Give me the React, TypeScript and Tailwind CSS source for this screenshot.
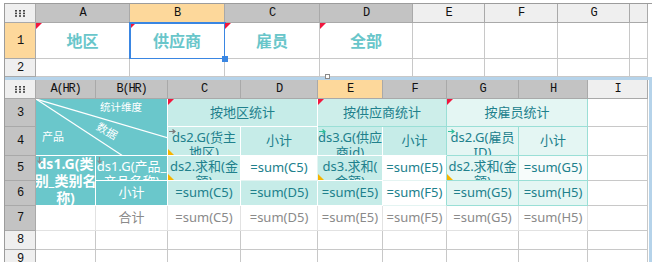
import React from 'react';

type CellProps = { className?: string; children?: React.ReactNode };

// header tones
const GRAY = 'bg-[#c3c3c3]';
const ORANGE = 'bg-[#fdd89b]';
const LIGHT = 'bg-[#efefef]';

// data cell tones
const TEAL = 'bg-[#6ac7cb] border-white text-white';
const MINT = 'bg-[#c6ece8] border-white text-[#20808c]';
const PALE = 'bg-[#e4f6f3] border-[#9adfd6] text-[#20808c]';
const BLANK = 'bg-white border-[#c8c8c8]';
const SUM = 'bg-white border-[#e4f4f2] text-[#20808c]';
const TOTAL = 'bg-white border-[#e2e2e2] text-[#8a8a8a]';

const Cell: React.FC<CellProps> = ({ className = '', children }) => (
  <div className={`relative flex items-center justify-center overflow-hidden whitespace-nowrap border-r border-b ${className}`}>
    {children}
  </div>
);

const Head: React.FC<CellProps> = ({ className = '', children }) => (
  <div
    className={`flex items-center justify-center border-r border-b border-[#a9a9a9] font-['Liberation_Mono',monospace] text-[12px] tracking-[-1.2px] text-[#111] ${className}`}
  >
    {children}
  </div>
);

const Dots = () => (
  <svg width="10" height="7" viewBox="0 0 10 7">
    {[0, 4, 8].map((x) =>
      [0, 2.6, 5.2].map((y) => <rect key={`${x}-${y}`} x={x} y={y} width="2" height="1.6" fill="#444" />)
    )}
  </svg>
);

const RedMark = () => (
  <span className="absolute left-0 top-0 border-t-[6px] border-r-[6px] border-t-[#f2163e] border-r-transparent" />
);

const YellowMark = () => (
  <span className="absolute left-0 bottom-0 border-b-[6px] border-r-[6px] border-b-[#f6b400] border-r-transparent" />
);

const ArrowRight = ({ color }: { color: string }) => (
  <svg className="absolute left-[1px] top-[2px]" width="7" height="5" viewBox="0 0 7 5">
    <path d="M0 2.5H5.5M3.5 0.5L6 2.5L3.5 4.5" stroke={color} strokeWidth="1.2" fill="none" />
  </svg>
);

const ArrowDown = () => (
  <svg className="absolute left-[1px] top-[1px]" width="5" height="7" viewBox="0 0 5 7">
    <path d="M2.5 0V5.5M0.5 3.5L2.5 6L4.5 3.5" stroke="#8a8a8a" strokeWidth="1.2" fill="none" />
  </svg>
);

// wrapped text, top aligned like the designer does when it overflows
const Lines = ({ lines, className = '' }: { lines: string[]; className?: string }) => (
  <div className={`flex flex-col items-center self-start pt-[3px] leading-[15px] ${className}`}>
    {lines.map((l) => (
      <span key={l}>{l}</span>
    ))}
  </div>
);

const TopPanel = () => (
  <div className="relative">
    <div className="grid grid-cols-[31px_94px_95px_95px_93px_72px_73px_72px_18px] grid-rows-[19px_36px_18px]">
      <Head className={LIGHT}>
        <Dots />
      </Head>
      <Head className={GRAY}>A</Head>
      <Head className={ORANGE}>B</Head>
      <Head className={GRAY}>C</Head>
      <Head className={GRAY}>D</Head>
      <Head className={LIGHT}>E</Head>
      <Head className={LIGHT}>F</Head>
      <Head className={LIGHT}>G</Head>
      <Head className={LIGHT}></Head>

      <Head className={ORANGE}>1</Head>
      {['地区', '供应商', '雇员', '全部'].map((t, i) => (
        <div
          key={t}
          className={`relative flex items-center justify-center border-r border-b border-[#c8c8c8] bg-white text-[16px] font-bold text-[#69c6ca] ${
            i === 1 ? '' : 'overflow-hidden'
          }`}
        >
          <RedMark />
          {t}
          {i === 1 && (
            <>
              <span className="absolute -left-[1px] -top-[1px] -right-[2px] -bottom-[2px] border-2 border-[#3a86e2]" />
              <span className="absolute -right-[4px] -bottom-[4px] z-10 h-[6px] w-[6px] bg-[#3a86e2]" />
            </>
          )}
        </div>
      ))}
      <Cell className={BLANK} />
      <Cell className={BLANK} />
      <Cell className={BLANK} />
      <Cell className={BLANK} />

      <Head className={LIGHT}>2</Head>
      {Array.from({ length: 8 }).map((_, i) => (
        <Cell key={i} className={BLANK} />
      ))}
    </div>
    {/* split handle */}
    <span className="absolute left-[320px] top-[70px] h-[5px] w-[5px] border border-[#8a8a8a] bg-white" />
  </div>
);

const DiagHeader = () => (
  <div className="relative col-span-2 row-span-2 overflow-hidden border-r border-b border-white bg-[#6ac7cb] text-white">
    <svg className="absolute left-0 top-0" width="132" height="57" viewBox="0 0 132 57">
      <line x1="0" y1="0" x2="132" y2="39" stroke="white" strokeWidth="1.2" />
      <line x1="0" y1="0" x2="87" y2="57" stroke="white" strokeWidth="1.2" />
    </svg>
    <span className="absolute left-[64px] top-[2px] text-[10.5px] leading-[12px]">统计维度</span>
    <span className="absolute left-[60px] top-[26px] rotate-[30deg] text-[11px] leading-[12px]">数据</span>
    <span className="absolute left-[6px] top-[32px] text-[11px] leading-[12px]">产品</span>
  </div>
);

const BottomPanel = () => (
  <div className="grid grid-cols-[31px_60px_72px_73px_77px_65px_64px_72px_69px_60px] grid-rows-[19px_28px_29px_25px_25px_25px_19px_19px] text-[13px]">
    <Head className={LIGHT}>
      <Dots />
    </Head>
    <Head className={GRAY}>A(HR)</Head>
    <Head className={GRAY}>B(HR)</Head>
    <Head className={GRAY}>C</Head>
    <Head className={GRAY}>D</Head>
    <Head className={ORANGE}>E</Head>
    <Head className={GRAY}>F</Head>
    <Head className={GRAY}>G</Head>
    <Head className={GRAY}>H</Head>
    <Head className={LIGHT}>I</Head>

    {/* row 3 */}
    <Head className={GRAY}>3</Head>
    <DiagHeader />
    <Cell className={`col-span-2 ${MINT}`}>
      <RedMark />
      按地区统计
    </Cell>
    <Cell className={`col-span-2 bg-[#cdeeea] border-[#9adfd6] text-[#20808c]`}>
      <RedMark />
      按供应商统计
    </Cell>
    <Cell className={`col-span-2 ${PALE}`}>
      <RedMark />
      按雇员统计
    </Cell>
    <Cell className={BLANK} />

    {/* row 4 */}
    <Head className={GRAY}>4</Head>
    <Cell className={MINT}>
      <ArrowRight color="#7a7a7a" />
      <YellowMark />
      <Lines lines={['ds2.G(货主', '地区)']} />
    </Cell>
    <Cell className={MINT}>小计</Cell>
    <Cell className={MINT}>
      <ArrowRight color="#2fbf9a" />
      <Lines lines={['ds3.G(供应', '商id)']} />
    </Cell>
    <Cell className={`${MINT} border-r-[#9adfd6]`}>小计</Cell>
    <Cell className={PALE}>
      <ArrowRight color="#2fbf9a" />
      <Lines lines={['ds2.G(雇员', 'ID)']} />
    </Cell>
    <Cell className={PALE}>小计</Cell>
    <Cell className={BLANK} />

    {/* row 5 */}
    <Head className={GRAY}>5</Head>
    <Cell className={`row-span-2 ${TEAL}`}>
      <ArrowDown />
      <div className="flex flex-col items-center text-[14px] font-bold leading-[17px]">
        <span>ds1.G(类</span>
        <span>别_类别名</span>
        <span>称)</span>
      </div>
    </Cell>
    <Cell className={TEAL}>
      <ArrowDown />
      <Lines lines={['ds1.G(产品_', '产品名称)']} />
    </Cell>
    <Cell className={MINT}>
      <YellowMark />
      <Lines lines={['ds2.求和(金', '额)']} />
    </Cell>
    <Cell className={SUM}>=sum(C5)</Cell>
    <Cell className={MINT}>
      <YellowMark />
      <Lines lines={['ds3.求和(', '金额)']} />
    </Cell>
    <Cell className={`${SUM} border-r-[#9adfd6]`}>=sum(E5)</Cell>
    <Cell className={PALE}>
      <YellowMark />
      <Lines lines={['ds2.求和(金', '额)']} />
    </Cell>
    <Cell className={`bg-[#f7fcfb] border-[#9adfd6] text-[#20808c]`}>=sum(G5)</Cell>
    <Cell className={BLANK} />

    {/* row 6 */}
    <Head className={GRAY}>6</Head>
    <Cell className={TEAL}>小计</Cell>
    <Cell className={MINT}>=sum(C5)</Cell>
    <Cell className={MINT}>=sum(D5)</Cell>
    <Cell className={MINT}>=sum(E5)</Cell>
    <Cell className={`${SUM} border-r-[#9adfd6]`}>=sum(F5)</Cell>
    <Cell className={PALE}>=sum(G5)</Cell>
    <Cell className={PALE}>=sum(H5)</Cell>
    <Cell className={BLANK} />

    {/* row 7 */}
    <Head className={GRAY}>7</Head>
    <Cell className={TOTAL} />
    <Cell className={TOTAL}>合计</Cell>
    <Cell className={TOTAL}>=sum(C5)</Cell>
    <Cell className={TOTAL}>=sum(D5)</Cell>
    <Cell className={TOTAL}>=sum(E5)</Cell>
    <Cell className={TOTAL}>=sum(F5)</Cell>
    <Cell className={TOTAL}>=sum(G5)</Cell>
    <Cell className={TOTAL}>=sum(H5)</Cell>
    <Cell className={BLANK} />

    {/* rows 8, 9 */}
    {['8', '9'].map((r) => (
      <React.Fragment key={r}>
        <Head className={LIGHT}>{r}</Head>
        {Array.from({ length: 9 }).map((_, i) => (
          <Cell key={i} className={BLANK} />
        ))}
      </React.Fragment>
    ))}
  </div>
);

export default function App() {
  return (
    <div className="h-[262px] w-[652px] overflow-hidden bg-white pl-[4px] pt-[3px] font-['Noto_Sans','Noto_Sans_CJK_SC',sans-serif]">
      <div className="w-[648px] border-l border-t border-[#9c9c9c]">
        <TopPanel />
        <div className="h-[3px] w-full bg-[#b5d3ea]" />
        <div className="w-[647px] border-r-[3px] border-[#b5d3ea]">
          <BottomPanel />
        </div>
      </div>
    </div>
  );
}
